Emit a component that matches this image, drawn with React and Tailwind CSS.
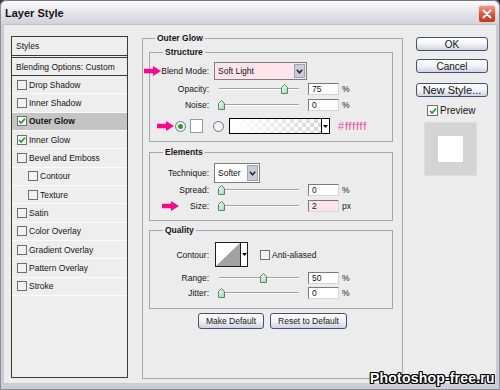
import React from 'react';

function Check({ checked, big }) {
  return (
    <span
      className={`${big ? 'w-[11px] h-[11px]' : 'w-[10px] h-[10px]'} shrink-0 border border-[#6f6f6f] ${
        checked ? 'bg-white' : 'bg-[#f2f2f2]'
      } flex items-center justify-center`}
    >
      {checked && (
        <svg width="8" height="8" viewBox="0 0 8 8">
          <path d="M1 3.8 L3.1 6 L7 1.6" stroke="#22a022" strokeWidth="1.7" fill="none" />
        </svg>
      )}
    </span>
  );
}

function PinkArrow({ className }) {
  return (
    <svg className={className} width="17" height="10" viewBox="0 0 17 10">
      <path d="M0 2.8 H9 V0 L17 5 L9 10 V7.2 H0 Z" fill="#f7098c" />
    </svg>
  );
}

function Thumb({ pct }) {
  return (
    <svg
      className="absolute top-1/2 -translate-y-1/2"
      style={{ left: 3 + pct * 0.84 }}
      width="7"
      height="10"
      viewBox="0 0 7 10"
    >
      <defs>
        <linearGradient id="tg" x1="0" y1="0" x2="1" y2="1">
          <stop offset="0" stopColor="#f4fbf6" />
          <stop offset="1" stopColor="#a9d2b6" />
        </linearGradient>
      </defs>
      <path d="M3.5 0.5 L6.5 3.5 V9.5 H0.5 V3.5 Z" fill="url(#tg)" stroke="#4f8a63" strokeWidth="1" />
    </svg>
  );
}

function Slider({ pct }) {
  return (
    <div className="relative ml-[6px] w-[93px] h-full shrink-0">
      <div className="absolute left-[4px] w-[80px] top-1/2 -mt-px h-[2px] border-t border-b border-t-[#a2a2a2] border-b-white" />
      <Thumb pct={pct} />
    </div>
  );
}

function Num({ v, pink }) {
  return (
    <div
      className={`w-[31px] h-[12px] shrink-0 border border-t-[#7a7a7a] border-l-[#7a7a7a] border-r-[#d6d6d6] border-b-[#d6d6d6] ${
        pink ? 'bg-[#fde3ea]' : 'bg-white'
      } pl-[3px] text-[8.5px] leading-[10px]`}
    >
      {v}
    </div>
  );
}

function Label({ children }) {
  return <span className="w-[59px] shrink-0 text-right text-[8.5px] leading-[10px]">{children}</span>;
}

function Chevron() {
  return (
    <svg width="7" height="5" viewBox="0 0 7 5">
      <path d="M0.8 0.8 L3.5 3.8 L6.2 0.8" stroke="#2a2a3a" strokeWidth="1.6" fill="none" />
    </svg>
  );
}

function Tri() {
  return (
    <svg width="5" height="3" viewBox="0 0 5 3">
      <path d="M0 0 H5 L2.5 3 Z" fill="#000" />
    </svg>
  );
}

function SliderRow({ label, pct, v, unit, pink, className, arrow }) {
  return (
    <div className={`relative flex items-center ${className}`}>
      {arrow && <PinkArrow className="absolute left-[12px] top-1/2 -translate-y-1/2" />}
      <Label>{label}</Label>
      <Slider pct={pct} />
      <Num v={v} pink={pink} />
      <span className="ml-[3px] text-[8.5px] leading-[10px]">{unit}</span>
    </div>
  );
}

function Btn({ children, className }) {
  return (
    <div
      className={`flex items-center justify-center rounded-[3px] border border-[#44506e] bg-linear-to-b from-white via-[#f2f3f7] to-[#cfd3e0] ${className}`}
    >
      {children}
    </div>
  );
}

const styleRows = [
  { label: 'Drop Shadow' },
  { label: 'Inner Shadow' },
  { label: 'Outer Glow', checked: true, active: true },
  { label: 'Inner Glow', checked: true },
  { label: 'Bevel and Emboss' },
  { label: 'Contour', indent: true },
  { label: 'Texture', indent: true },
  { label: 'Satin' },
  { label: 'Color Overlay' },
  { label: 'Gradient Overlay' },
  { label: 'Pattern Overlay' },
  { label: 'Stroke' },
];

export default function App() {
  return (
    <div className="relative w-[500px] h-[390px] overflow-hidden bg-[#34343c] text-[#141414] [font-family:'Liberation_Sans',Arial,sans-serif]">
      <div className="h-full rounded-t-[6px] flex flex-col bg-[#cbccd4] border-x border-b border-[#8e8e98]">
        {/* Title bar */}
        <div className="h-[24px] shrink-0 rounded-t-[6px] border-t border-[#767682] bg-linear-to-b from-[#fbfbfd] to-[#d0d1da] flex items-center justify-between pl-[4px] pr-[3px]">
          <span className="text-[11px] font-bold leading-[14px] mt-[1px]">Layer Style</span>
          <div className="w-[18px] h-[18px] mt-[2px] rounded-[3px] border border-[#f4d0c8] bg-linear-to-b from-[#ec9a86] via-[#d85a3e] to-[#c0381e] flex items-center justify-center">
            <svg width="10" height="10" viewBox="0 0 10 10">
              <path d="M1.5 1.5 L8.5 8.5 M8.5 1.5 L1.5 8.5" stroke="#fff" strokeWidth="2" strokeLinecap="round" />
            </svg>
          </div>
        </div>

        {/* Body */}
        <div className="flex-1 mx-[3px] mb-[6px] bg-[#ececec] border-t border-[#c0c0c8] flex items-start">
          {/* Left styles list */}
          <div className="ml-[7px] mt-[11px] w-[117px] h-[342px] shrink-0 border border-[#3b3b3b] bg-[#eeeeee] flex flex-col text-[8.5px] leading-[10px]">
            <div className="h-[21px] shrink-0 border-b-[3px] border-double border-[#3b3b3b] pl-[4px] flex items-center">
              Styles
            </div>
            <div className="h-[18px] shrink-0 border-b border-[#3b3b3b] pl-[4px] flex items-center">
              Blending Options: Custom
            </div>
            {styleRows.map((r) => (
              <div
                key={r.label}
                className={`h-[18.35px] shrink-0 border-b border-[#fbfbfb] flex items-center ${
                  r.indent ? 'pl-[16px]' : 'pl-[5px]'
                } ${r.active ? 'bg-[#c4c4c4] font-bold' : ''}`}
              >
                <Check checked={r.checked} />
                <span className="ml-[2px]">{r.label}</span>
              </div>
            ))}
          </div>

          {/* Middle: Outer Glow */}
          <fieldset className="ml-[14px] mt-[7px] w-[261px] h-[347px] shrink-0 border border-[#a6a6a6] min-w-0">
            <legend className="ml-[12px] px-[2px] h-[12px] text-[8.5px] font-bold leading-[12px]">Outer Glow</legend>

            {/* Structure */}
            <fieldset className="ml-[6px] mt-[2px] w-[244px] border border-[#a6a6a6] pt-[4px] pb-[7px] min-w-0">
              <legend className="ml-[13px] px-[2px] h-[12px] text-[8.5px] font-bold leading-[12px]">Structure</legend>
              <div className="relative h-[18px] flex items-center">
                <PinkArrow className="absolute left-[-6px] top-1/2 -translate-y-1/2" />
                <Label>Blend Mode:</Label>
                <div className="ml-[5px] w-[93px] h-[18px] flex border border-[#7e7e7e] bg-[#ffe4ec]">
                  <span className="flex-1 pl-[3px] text-[8.5px] leading-[16px]">Soft Light</span>
                  <span className="w-[11px] h-[14px] mt-px mr-px border border-[#9ea2b4] bg-[#c9ccd9] flex items-center justify-center">
                    <Chevron />
                  </span>
                </div>
              </div>
              <SliderRow label="Opacity:" pct={75} v="75" unit="%" className="h-[18px]" />
              <SliderRow label="Noise:" pct={0} v="0" unit="%" className="h-[14px]" />
              <div className="relative h-[16px] mt-[6px] flex items-center">
                <PinkArrow className="absolute left-[7px] top-1/2 -translate-y-1/2" />
                <span className="ml-[25px] w-[11px] h-[11px] shrink-0 rounded-full border border-[#5d7694] bg-[#f3f3f3] flex items-center justify-center">
                  <span className="w-[5px] h-[5px] rounded-full bg-[#28a028]" />
                </span>
                <span className="ml-[4px] w-[13px] h-[14px] shrink-0 border border-[#9a9a9a] bg-white" />
                <span className="ml-[10px] w-[11px] h-[11px] shrink-0 rounded-full border border-[#5d7694] bg-[#f3f3f3]" />
                <div className="ml-[5px] w-[101px] h-[16px] shrink-0 border border-black flex">
                  <div className="flex-1 [background-image:linear-gradient(to_right,#fff_5%,rgba(255,255,255,0)),repeating-conic-gradient(#d6d6d6_0_25%,#fff_0_50%)] [background-size:100%_100%,8px_8px]" />
                  <div className="w-[8px] border-l border-black bg-white flex items-center justify-center">
                    <Tri />
                  </div>
                </div>
                <span className="ml-[8px] text-[11px] leading-[12px] tracking-[0.8px] text-[#f2479e]">#ffffff</span>
              </div>
            </fieldset>

            {/* Elements */}
            <fieldset className="ml-[6px] mt-[4px] w-[244px] border border-[#a6a6a6] pt-[5px] pb-[6px] min-w-0">
              <legend className="ml-[13px] px-[2px] h-[12px] text-[8.5px] font-bold leading-[12px]">Elements</legend>
              <div className="h-[20px] flex items-center">
                <Label>Technique:</Label>
                <div className="ml-[5px] w-[46px] h-[20px] flex border border-[#7e7e7e] bg-white">
                  <span className="flex-1 pl-[3px] text-[8.5px] leading-[18px]">Softer</span>
                  <span className="w-[11px] h-[16px] mt-px mr-px border border-[#9ea2b4] bg-[#c9ccd9] flex items-center justify-center">
                    <Chevron />
                  </span>
                </div>
              </div>
              <SliderRow label="Spread:" pct={0} v="0" unit="%" className="h-[13px]" />
              <SliderRow label="Size:" pct={0} v="2" unit="px" pink arrow className="h-[16px] mt-[2px]" />
            </fieldset>

            {/* Quality */}
            <fieldset className="ml-[6px] mt-[3px] w-[244px] border border-[#a6a6a6] pt-[6px] pb-[8px] min-w-0">
              <legend className="ml-[13px] px-[2px] h-[12px] text-[8.5px] font-bold leading-[12px]">Quality</legend>
              <div className="h-[25px] flex items-center">
                <Label>Contour:</Label>
                <div className="ml-[6px] w-[33px] h-[25px] shrink-0 border border-[#1e1e1e] bg-white flex">
                  <svg width="24" height="23" viewBox="0 0 24 23">
                    <polygon points="0,23 24,0 24,23" fill="#a2a2a2" />
                  </svg>
                  <div className="flex-1 border-l border-[#1e1e1e] flex items-center justify-center">
                    <Tri />
                  </div>
                </div>
                <span className="ml-[12px]">
                  <Check />
                </span>
                <span className="ml-[2px] text-[8.5px] leading-[10px]">Anti-aliased</span>
              </div>
              <SliderRow label="Range:" pct={50} v="50" unit="%" className="h-[16px] mt-[3px]" />
              <SliderRow label="Jitter:" pct={0} v="0" unit="%" className="h-[14px]" />
            </fieldset>

            <div className="mt-[4px] flex justify-center gap-[6px] text-[8.5px]">
              <Btn className="w-[66px] h-[16px]">Make Default</Btn>
              <Btn className="w-[77px] h-[16px]">Reset to Default</Btn>
            </div>
          </fieldset>

          {/* Right column */}
          <div className="ml-[13px] mt-[12px] w-[72px] shrink-0 flex flex-col text-[10px]">
            <Btn className="h-[14px]">OK</Btn>
            <Btn className="h-[14px] mt-[8px]">Cancel</Btn>
            <Btn className="h-[14px] mt-[10px] text-[11px]">New Style...</Btn>
            <div className="ml-[11px] mt-[8px] h-[11px] flex items-center">
              <Check checked big />
              <span className="ml-[2px] leading-[11px]">Preview</span>
            </div>
            <div className="ml-[8px] mt-[6px] w-[53px] h-[54px] bg-[#d4d4d4] border border-[#dedede] flex items-center justify-center">
              <div className="w-[25px] h-[26px] bg-white" />
            </div>
          </div>
        </div>
      </div>

      {/* Watermark overlay */}
      <div className="absolute left-[370px] top-[368px] text-[14px] font-bold leading-[20px] text-white tracking-[0.2px] [text-shadow:1px_0_0_#000,-1px_0_0_#000,0_1px_0_#000,0_-1px_0_#000,1px_1px_0_#000,-1px_-1px_0_#000,1px_-1px_0_#000,-1px_1px_0_#000]">
        Photoshop-free.ru
      </div>
    </div>
  );
}
